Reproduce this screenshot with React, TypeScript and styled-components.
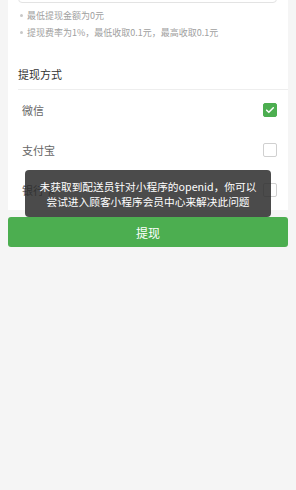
import React from 'react';
import styled, { createGlobalStyle } from 'styled-components';

const GlobalStyle = createGlobalStyle`
  html, body {
    margin: 0;
    padding: 0;
    background: #f5f5f5;
    font-family: "Noto Sans CJK SC", "Noto Sans", sans-serif;
  }
`;

const Page = styled.div`
  width: 296px;
  height: 490px;
  overflow: hidden;
  position: relative;
  background: #f5f5f5;
`;

const Card = styled.div`
  margin: -31px 8px 0;
  background: #fff;
  display: flex;
  flex-direction: column;
`;

const InputBox = styled.div`
  margin: 0 11px 0 10px;
  height: 32px;
  border: 1px solid #e3e3e3;
  border-radius: 4px;
`;

const Hints = styled.ul`
  list-style: none;
  margin: 0;
  padding: 4px 0 0 12px;
  display: flex;
  flex-direction: column;
`;

const Hint = styled.li`
  display: flex;
  align-items: center;
  gap: 4px;
  height: 17px;
  font-size: 9px;
  color: #a0a0a0;

  &::before {
    content: '';
    width: 3px;
    height: 3px;
    border-radius: 50%;
    background: #c8c8c8;
  }
`;

const SectionTitle = styled.div`
  margin: 18px 0 0 10px;
  height: 30px;
  display: flex;
  align-items: center;
  font-size: 11px;
  color: #333;
  border-bottom: 1px solid #eeeeee;
`;

const Options = styled.div`
  display: flex;
  flex-direction: column;
  padding: 0 11px 0 14px;
`;

const OptionRow = styled.div`
  height: 40px;
  display: flex;
  align-items: center;
  justify-content: space-between;
  font-size: 11px;
  color: #666;
`;

const Check = styled.span<{ $on?: boolean }>`
  width: 14px;
  height: 14px;
  box-sizing: border-box;
  border-radius: 2px;
  border: 1px solid ${p => (p.$on ? '#4cae50' : '#d0d0d0')};
  background: ${p => (p.$on ? '#4cae50' : '#fff')};
  display: flex;
  align-items: center;
  justify-content: center;

  svg {
    width: 10px;
    height: 10px;
  }
`;

const SubmitButton = styled.button`
  margin: 7px 8px 0;
  height: 30px;
  width: 280px;
  border: none;
  border-radius: 3px;
  background: #4cae50;
  color: #fff;
  font-family: "Noto Sans CJK SC", sans-serif;
  font-size: 12px;
  cursor: pointer;
`;

const Toast = styled.div`
  position: absolute;
  left: 25px;
  top: 170px;
  width: 246px;
  height: 47px;
  box-sizing: border-box;
  border-radius: 4px;
  background: rgba(40, 40, 40, 0.84);
  color: #fff;
  font-size: 10.7px;
  line-height: 15px;
  text-align: center;
  display: flex;
  flex-direction: column;
  justify-content: center;
`;

const options = [
  { name: '微信', on: true },
  { name: '支付宝', on: false },
  { name: '银行卡', on: false },
];

export default function App() {
  return (
    <Page>
      <GlobalStyle />
      <Card>
        <InputBox />
        <Hints>
          <Hint>最低提现金额为0元</Hint>
          <Hint>提现费率为1%，最低收取0.1元，最高收取0.1元</Hint>
        </Hints>
        <SectionTitle>提现方式</SectionTitle>
        <Options>
          {options.map(o => (
            <OptionRow key={o.name}>
              {o.name}
              <Check $on={o.on}>
                {o.on && (
                  <svg viewBox="0 0 12 12">
                    <path d="M2 6.2l2.6 2.6L10 3.4" fill="none" stroke="#fff" strokeWidth="1.8" strokeLinecap="round" strokeLinejoin="round" />
                  </svg>
                )}
              </Check>
            </OptionRow>
          ))}
        </Options>
      </Card>
      <SubmitButton>提现</SubmitButton>
      <Toast>
        <div>未获取到配送员针对小程序的openid，你可以</div>
        <div>尝试进入顾客小程序会员中心来解决此问题</div>
      </Toast>
    </Page>
  );
}
